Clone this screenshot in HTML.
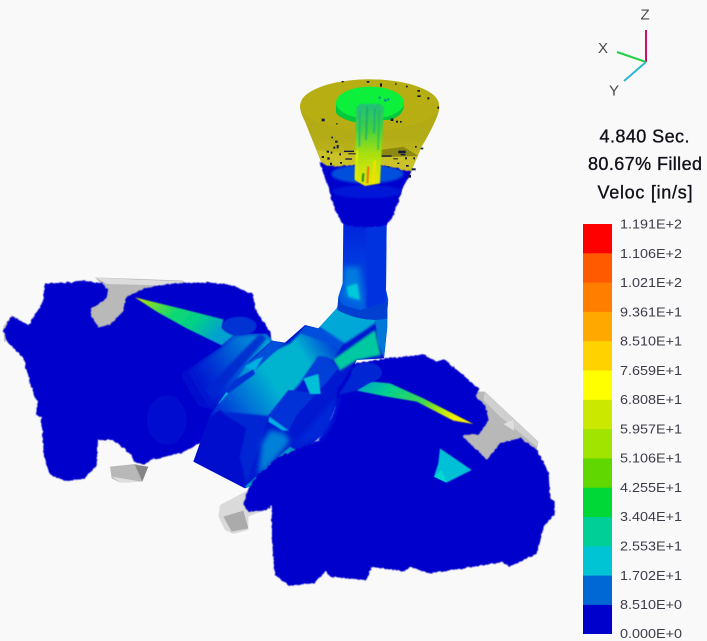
<!DOCTYPE html>
<html>
<head>
<meta charset="utf-8">
<style>
html,body{margin:0;padding:0;background:#f9f9f9;width:707px;height:641px;overflow:hidden}
svg{display:block;position:absolute;left:0;top:0}
text{font-family:"Liberation Sans",sans-serif}
</style>
</head>
<body>
<svg width="707" height="641" viewBox="0 0 707 641" xmlns="http://www.w3.org/2000/svg">
<defs>
<filter id="j" x="-5%" y="-5%" width="110%" height="110%"><feTurbulence type="fractalNoise" baseFrequency="0.1" numOctaves="1" seed="4"/><feDisplacementMap in="SourceGraphic" scale="11" xChannelSelector="R" yChannelSelector="G"/><feGaussianBlur stdDeviation="1.2"/></filter>
<filter id="b0" x="-10%" y="-10%" width="120%" height="120%"><feGaussianBlur stdDeviation="1.5"/></filter>
<filter id="b1" x="-20%" y="-20%" width="140%" height="140%"><feGaussianBlur stdDeviation="3"/></filter>
<filter id="b2" x="-30%" y="-30%" width="160%" height="160%"><feGaussianBlur stdDeviation="8"/></filter>
<filter id="b4" x="-30%" y="-30%" width="160%" height="160%"><feGaussianBlur stdDeviation="18"/></filter>
<clipPath id="mclip"><polygon points="10,485 60,345 170,190 245,122 285,128 345,75 385,85 440,25 450,0 592,0 592,80 582,175 500,180 400,400 260,530 165,565"/></clipPath>
<clipPath id="armclip"><polygon points="500,340 660,232 700,192 800,190 830,225 640,420 560,400"/></clipPath>
<clipPath id="cclip"><path d="M118,275 C160,300 190,285 260,282 C320,282 350,300 395,305 L370,350 L340,435 L320,465 Q255,480 190,462 L170,430 L140,340 Z"/></clipPath>
<clipPath id="sclip"><path d="M190,455 L320,455 L318,660 L325,690 L322,720 L322,745 Q250,760 172,720 L175,680 L188,640 Z"/></clipPath>
<linearGradient id="top" gradientUnits="userSpaceOnUse" x1="70" y1="340" x2="440" y2="90"><stop offset="0" stop-color="#0028d8"/><stop offset=".22" stop-color="#0070d8"/><stop offset=".45" stop-color="#00b4d0"/><stop offset=".72" stop-color="#00b4d0"/><stop offset=".92" stop-color="#0048d8"/></linearGradient>
<linearGradient id="stem" x1="0" y1="0" x2="0" y2="1"><stop offset="0" stop-color="#0020dc"/><stop offset=".5" stop-color="#0040e0"/><stop offset="1" stop-color="#0070e0"/></linearGradient>
<linearGradient id="flow" x1="0" y1="0" x2="0" y2="1"><stop offset="0" stop-color="#20c078"/><stop offset=".3" stop-color="#40d040"/><stop offset=".6" stop-color="#a8e010"/><stop offset="1" stop-color="#e8e800"/></linearGradient>
<linearGradient id="cone" x1="0" y1="0" x2="0" y2="1"><stop offset="0" stop-color="#b0a810"/><stop offset=".6" stop-color="#b4ac16"/><stop offset="1" stop-color="#ccc424"/></linearGradient>
<linearGradient id="wedge1" x1="0" y1="0" x2="1" y2=".4"><stop offset="0" stop-color="#f0f000"/><stop offset=".12" stop-color="#90e020"/><stop offset=".45" stop-color="#10d870"/><stop offset=".7" stop-color="#00d088"/><stop offset="1" stop-color="#00a0d0"/></linearGradient>
<linearGradient id="wedge2" x1="0" y1="0" x2="1" y2=".4"><stop offset="0" stop-color="#00a0d0"/><stop offset=".3" stop-color="#00d090"/><stop offset=".65" stop-color="#40d850"/><stop offset=".85" stop-color="#b0e810"/><stop offset="1" stop-color="#f0f000"/></linearGradient>
<linearGradient id="arm" gradientUnits="userSpaceOnUse" x1="540" y1="340" x2="800" y2="190"><stop offset="0" stop-color="#0000cc"/><stop offset=".35" stop-color="#0030d4"/><stop offset=".7" stop-color="#0070d8"/><stop offset="1" stop-color="#00a8d4"/></linearGradient>
</defs>

<rect width="707" height="641" fill="#f9f9f9"/>

<!-- grey runners behind left -->
<g transform="translate(0,270) scale(.33333)">
<polygon points="285,22 550,32 560,60 440,75 380,130 340,175 290,187 258,120 320,60" fill="#b9b9b9"/>
<polygon points="285,22 390,28 490,32 550,34 520,50 440,45 320,42" fill="#dcdcdc"/>
<polygon points="10,170 35,135 55,145 30,215 12,215" fill="#c8c8c8"/>
<polygon points="330,590 405,582 440,590 425,635 360,638 335,625" fill="#b8b8b8"/>
<polygon points="405,585 445,590 427,635" fill="#858585"/>
<polygon points="335,620 425,635 360,638" fill="#dedede"/>
</g>

<!-- grey pieces behind right -->
<g transform="translate(190,300) scale(.33333)">
<polygon points="860,275 885,275 1045,425 1040,450 960,420 920,445 895,495 800,412" fill="#b8b8b8"/>
<polygon points="885,275 1045,425 1040,440 930,350 880,300" fill="#cfcfcf"/>
<polygon points="940,372 970,360 972,392" fill="#e0e0e0"/>
<polygon points="90,615 175,570 260,560 258,620 200,640 175,650 175,690 130,702 105,690 85,650" fill="#dadada"/>
<polygon points="100,650 160,632 175,685 125,695" fill="#ababab"/>
</g>

<!-- left blob -->
<g transform="translate(0,270) scale(.33333)">
<path filter="url(#j)" fill="#0000cc" stroke="#0000cc" stroke-width="12" stroke-linejoin="round" d="M140,46 L200,44 L260,38 L305,46 L318,62 L314,82 L266,112 L266,135 L292,180 L340,166 L376,125 L384,85 L440,60 L500,48 L560,44 L630,44 L690,50 L752,76 L766,130 L806,190 L810,240 L700,400 L596,516 L540,544 L450,564 L430,578 L408,570 L392,545 L340,504 L288,504 L284,585 L250,620 L200,628 L156,612 L138,560 L130,440 L114,430 L120,400 L96,340 L76,260 L26,212 L16,180 L38,146 L90,176 L106,142 L134,100 Z"/>
<ellipse cx="500" cy="450" rx="60" ry="75" fill="#0008d0" filter="url(#b2)"/>
<g clip-path="url(#armclip)"><path d="M500,340 L660,232 L700,192 L800,190 L830,225 L640,420 L560,400 Z" fill="url(#arm)" filter="url(#b2)"/></g>
<polygon points="615,360 780,190 800,205 640,385" fill="#0028d0" opacity=".85" filter="url(#b1)"/>
<polygon points="405,82 540,115 670,148 665,175 700,196 665,226 560,175 470,125" fill="url(#wedge1)" filter="url(#b0)"/>
<ellipse cx="718" cy="168" rx="52" ry="28" fill="#0030d4" filter="url(#b0)"/>
</g>

<!-- central manifold -->
<g transform="translate(190,300) scale(.33333)">
<g clip-path="url(#mclip)">
<rect x="0" y="0" width="600" height="580" fill="#0018d0"/>
<polygon points="60,345 170,190 300,130 345,85 385,85 460,130 430,180 385,170 330,250 240,350 130,340" fill="url(#top)" filter="url(#b1)"/>
<polygon points="345,78 385,85 465,125 445,145 390,120 330,100" fill="#0050dc" filter="url(#b0)"/>
<polygon points="385,80 450,0 592,0 555,70 465,130" fill="#00a8d8" filter="url(#b1)"/>
<polygon points="555,60 592,15 592,90 582,175 565,130" fill="#0078d8" filter="url(#b0)"/>
<polygon points="430,178 555,90 572,165 500,180 450,212" fill="#00c8a0" filter="url(#b1)"/>
<polygon points="10,485 55,355 90,330 170,385 150,470 165,565" fill="#000ccc" filter="url(#b0)"/>
<polygon points="90,335 235,350 210,430 170,545 150,470 170,385" fill="#0028d4" filter="url(#b1)"/>
<polygon points="205,530 215,430 240,390 285,400 300,425 245,490" fill="#0080d8" filter="url(#b2)"/>
<polygon points="232,350 295,270 380,280 320,345 295,395" fill="#0030d8" filter="url(#b0)"/>
<polygon points="238,350 280,380 296,392 278,392 235,365" fill="#00b0e0" filter="url(#b0)"/>
<polygon points="385,170 410,170 445,205 395,265 340,235" fill="#0040d8" filter="url(#b0)"/>
<polygon points="340,235 385,222 392,282 360,282" fill="#00c0d8" filter="url(#b0)"/>
<polygon points="170,195 245,122 285,128 195,210" fill="#0050d8" filter="url(#b0)"/>
<polygon points="165,200 195,180 220,170 195,212" fill="#00b0e0" filter="url(#b0)"/>
<polygon points="65,295 95,262 115,280 85,312" fill="#00b8dc" filter="url(#b0)"/>
<polygon points="95,262 190,208 195,222 115,280" fill="#0030d4" filter="url(#b0)"/>
<polygon points="165,560 300,440 320,452 180,570" fill="#00a0c8" filter="url(#b0)"/>
</g>
</g>

<!-- right blob -->
<g transform="translate(190,300) scale(.33333)">
<path filter="url(#j)" fill="#0000cc" stroke="#0000cc" stroke-width="12" stroke-linejoin="round" d="M496,196 L600,180 L696,170 L740,190 L762,184 L860,268 L850,290 L880,320 L890,360 L866,395 L804,404 L892,488 L932,436 L990,420 L1036,454 L1070,520 L1074,590 L1088,610 L1088,640 L1056,678 L1036,756 L960,794 L940,780 L850,794 L720,814 L660,794 L640,808 L540,794 L526,834 L424,824 L408,804 L370,844 L300,850 L260,820 L250,700 L252,600 L226,625 L178,630 L166,612 L180,570 L204,532 L270,476 L390,425 L436,345 L448,275 Z"/>
<polygon points="300,445 390,345 450,285 425,370 395,415 340,430" fill="#0028d8" filter="url(#b2)"/>
<polygon points="445,285 490,215 560,240 500,272" fill="#0028d4" filter="url(#b1)"/>
<polygon points="545,245 600,250 700,295 850,372 790,362 680,305 590,290 500,272" fill="url(#wedge2)" filter="url(#b0)"/>
<ellipse cx="530" cy="218" rx="46" ry="30" fill="#0028d4" filter="url(#b0)"/>
<polygon points="750,445 845,510 770,548 732,530 745,490" fill="#00c0d8" filter="url(#b0)"/>
<polygon points="732,530 755,510 770,548" fill="#00d8d0"/>
</g>

<!-- sprue -->
<g transform="translate(280,70) scale(.33333)">
<!-- stem -->
<g clip-path="url(#sclip)">
<rect x="170" y="450" width="160" height="310" fill="url(#stem)"/>
<rect x="258" y="455" width="62" height="300" fill="#0030e0" filter="url(#b1)"/>
<polygon points="192,590 240,590 245,700 190,680" fill="#00a0e0" opacity=".6" filter="url(#b2)"/>
<polygon points="200,650 232,640 240,690 205,680" fill="#00d8d8" opacity=".85" filter="url(#b1)"/>
<polygon points="172,680 190,705 240,720 322,695 325,745 250,760 172,725" fill="#0040d0" filter="url(#b0)"/>
</g>
<!-- cone -->
<path d="M60,108 C62,72 150,28 268,28 C380,28 478,68 478,112 C478,128 462,168 425,230 L385,325 L140,320 L115,255 L75,155 C65,135 60,120 60,108 Z" fill="url(#cone)"/>
<ellipse cx="269" cy="105" rx="208" ry="77" fill="#b6ae12"/>
<polygon points="110,240 230,255 300,250 410,260 385,325 340,290 230,285 145,315" fill="#cac228"/>
<polygon points="300,240 370,230 415,258 300,262" fill="#8d8810"/>
<!-- basin -->
<path d="M118,275 C160,300 190,285 260,282 C320,282 350,300 395,305 L370,350 L340,435 L320,465 Q255,480 190,462 L170,430 L140,340 Z" fill="#0004ce" filter="url(#j)"/>
<g clip-path="url(#cclip)">
<ellipse cx="262" cy="312" rx="108" ry="28" fill="#0050dc" filter="url(#b1)"/>
<ellipse cx="262" cy="365" rx="105" ry="20" fill="#0018d8" filter="url(#b1)"/>
</g>
<!-- disc -->
<path d="M168,100 L168,128 C180,150 240,165 285,160 L310,150 L330,150 C360,140 372,125 372,100 Z" fill="#00c83c"/>
<ellipse cx="270" cy="98" rx="102" ry="48" fill="#0cf03c"/>
<!-- flow -->
<polygon points="228,112 240,102 300,102 312,112 300,340 255,348 224,330" fill="url(#flow)" filter="url(#b0)"/>
<g filter="url(#b0)" stroke-width="5" fill="none">
<path d="M240,120 L238,230" stroke="#10a8a0" opacity=".7"/>
<path d="M262,110 L258,210" stroke="#10a078" opacity=".7"/>
<path d="M285,115 L282,190" stroke="#10a888" opacity=".7"/>
<path d="M298,120 L294,240" stroke="#18b860" opacity=".7"/>
<path d="M265,290 L262,340" stroke="#f07010" stroke-width="6"/>
<path d="M250,310 L248,335" stroke="#109040" stroke-width="6"/>
<path d="M232,240 L228,325" stroke="#e0e810" stroke-width="6"/>
<path d="M285,270 L280,340" stroke="#f0e000" stroke-width="8"/>
</g>
<!-- speckle -->
<g fill="#101840">
<rect x="125" y="146" width="9" height="8"/><rect x="185" y="33" width="6" height="4"/><rect x="260" y="33" width="8" height="5"/><rect x="300" y="40" width="6" height="10"/><rect x="345" y="40" width="5" height="4"/><rect x="378" y="47" width="5" height="5"/><rect x="412" y="60" width="8" height="5"/><rect x="412" y="76" width="10" height="5"/><rect x="442" y="82" width="6" height="6"/><rect x="472" y="110" width="5" height="6"/><rect x="168" y="160" width="5" height="3"/><rect x="332" y="145" width="8" height="8"/><rect x="348" y="152" width="6" height="6"/><rect x="360" y="153" width="5" height="5"/>
<rect x="154" y="200" width="5" height="5"/><rect x="165" y="212" width="8" height="6"/><rect x="170" y="225" width="6" height="10"/><rect x="160" y="230" width="6" height="6"/><rect x="140" y="242" width="7" height="6"/><rect x="152" y="245" width="5" height="6"/><rect x="125" y="258" width="7" height="6"/><rect x="142" y="262" width="7" height="7"/><rect x="192" y="242" width="30" height="4"/><rect x="205" y="250" width="22" height="3"/><rect x="196" y="265" width="20" height="4"/><rect x="150" y="278" width="6" height="7"/><rect x="178" y="250" width="5" height="6"/><rect x="180" y="276" width="6" height="5"/>
<rect x="355" y="242" width="22" height="8"/><rect x="362" y="252" width="14" height="4"/><rect x="405" y="228" width="5" height="5"/><rect x="422" y="233" width="8" height="5"/><rect x="305" y="256" width="30" height="4"/><rect x="340" y="265" width="14" height="3"/><rect x="375" y="262" width="6" height="6"/><rect x="400" y="262" width="5" height="6"/><rect x="352" y="278" width="6" height="4"/><rect x="378" y="285" width="8" height="5"/><rect x="395" y="295" width="12" height="6"/><rect x="385" y="315" width="8" height="8"/><rect x="322" y="288" width="6" height="4"/>
<rect x="296" y="80" width="6" height="6" fill="#0080a0"/><rect x="312" y="88" width="8" height="6" fill="#0080a0"/><rect x="322" y="85" width="6" height="6" fill="#0080a0"/>
</g>
</g>

<!-- axes -->
<g stroke-width="2" fill="none">
<line x1="646" y1="62" x2="646" y2="30" stroke="#d0105c"/>
<line x1="646" y1="62" x2="617" y2="52" stroke="#20d040"/>
<line x1="646" y1="62" x2="624" y2="81" stroke="#30b8d0"/>
</g>
<g fill="#4a4a4a" font-size="15">
<text x="640.500" y="19.500">Z</text>
<text x="598" y="53">X</text>
<text x="609" y="95.500">Y</text>
</g>

<!-- titles -->
<g fill="#101018" stroke="#101018" stroke-width=".35" font-size="18" text-anchor="middle">
<text x="644.5" y="142.500" textLength="90">4.840 Sec.</text>
<text x="645" y="170" textLength="114">80.67% Filled</text>
<text x="645" y="198.500" textLength="95">Veloc [in/s]</text>
</g>

<!-- legend -->
<rect x="583" y="224" width="29" height="30" fill="#ff0000"/>
<rect x="583" y="253.300" width="29" height="30" fill="#ff5a00"/>
<rect x="583" y="282.600" width="29" height="30" fill="#ff7e00"/>
<rect x="583" y="311.900" width="29" height="30" fill="#ffa800"/>
<rect x="583" y="341.200" width="29" height="30" fill="#ffd200"/>
<rect x="583" y="370.500" width="29" height="30" fill="#ffff00"/>
<rect x="583" y="399.800" width="29" height="30" fill="#cbe800"/>
<rect x="583" y="429.100" width="29" height="30" fill="#a0e400"/>
<rect x="583" y="458.400" width="29" height="30" fill="#60d800"/>
<rect x="583" y="487.700" width="29" height="30" fill="#00d838"/>
<rect x="583" y="517" width="29" height="30" fill="#00d098"/>
<rect x="583" y="546.300" width="29" height="30" fill="#00c4d4"/>
<rect x="583" y="575.600" width="29" height="30" fill="#0068d4"/>
<rect x="583" y="604.900" width="29" height="29.100" fill="#0000cc"/>

<g fill="#3c3c48" font-size="13">
<text x="620" y="228.500" textLength="62" lengthAdjust="spacingAndGlyphs">1.191E+2</text>
<text x="620" y="257.800" textLength="62" lengthAdjust="spacingAndGlyphs">1.106E+2</text>
<text x="620" y="287" textLength="62" lengthAdjust="spacingAndGlyphs">1.021E+2</text>
<text x="620" y="316.300" textLength="62" lengthAdjust="spacingAndGlyphs">9.361E+1</text>
<text x="620" y="345.600" textLength="62" lengthAdjust="spacingAndGlyphs">8.510E+1</text>
<text x="620" y="374.900" textLength="62" lengthAdjust="spacingAndGlyphs">7.659E+1</text>
<text x="620" y="404.100" textLength="62" lengthAdjust="spacingAndGlyphs">6.808E+1</text>
<text x="620" y="433.400" textLength="62" lengthAdjust="spacingAndGlyphs">5.957E+1</text>
<text x="620" y="462.700" textLength="62" lengthAdjust="spacingAndGlyphs">5.106E+1</text>
<text x="620" y="492" textLength="62" lengthAdjust="spacingAndGlyphs">4.255E+1</text>
<text x="620" y="521.200" textLength="62" lengthAdjust="spacingAndGlyphs">3.404E+1</text>
<text x="620" y="550.500" textLength="62" lengthAdjust="spacingAndGlyphs">2.553E+1</text>
<text x="620" y="579.800" textLength="62" lengthAdjust="spacingAndGlyphs">1.702E+1</text>
<text x="620" y="609" textLength="62" lengthAdjust="spacingAndGlyphs">8.510E+0</text>
<text x="620" y="638" textLength="62" lengthAdjust="spacingAndGlyphs">0.000E+0</text>
</g>
</svg>
</body>
</html>
